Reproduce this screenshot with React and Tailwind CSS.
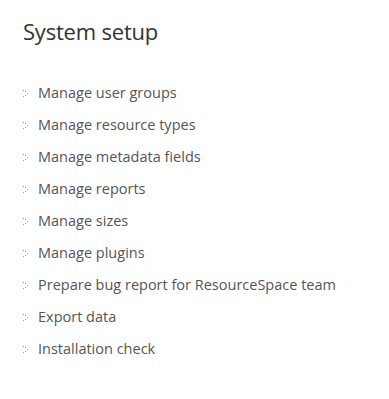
const items = [
  'Manage user groups',
  'Manage resource types',
  'Manage metadata fields',
  'Manage reports',
  'Manage sizes',
  'Manage plugins',
  'Prepare bug report for ResourceSpace team',
  'Export data',
  'Installation check',
]

function Bullet() {
  return (
    <svg width="5" height="7" viewBox="0 0 5 7" className="shrink-0">
      <rect x="0" y="0" width="1" height="1" fill="#9a9a9a" />
      <rect x="2" y="1" width="1" height="1" fill="#9a9a9a" />
      <rect x="4" y="3" width="1" height="1" fill="#9a9a9a" />
      <rect x="2" y="5" width="1" height="1" fill="#9a9a9a" />
      <rect x="0" y="6" width="1" height="1" fill="#9a9a9a" />
    </svg>
  )
}

export default function App() {
  return (
    <div className="w-[389px] h-[399px] bg-white font-['Open_Sans',sans-serif] pl-[23px] pt-[16px]">
      <h1 className="text-[22px] leading-[30px] text-[#333333] tracking-[-0.2px]">System setup</h1>
      <ul className="mt-[36px] flex flex-col gap-[10px]">
        {items.map((item) => (
          <li key={item} className="flex items-center gap-[10px] h-[22px]">
            <Bullet />
            <a href="#" className="text-[14.5px] text-[#555555] leading-[22px]">{item}</a>
          </li>
        ))}
      </ul>
    </div>
  )
}
